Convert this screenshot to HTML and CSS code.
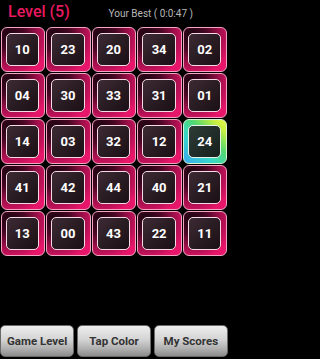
FILE: index.html
```html
<!DOCTYPE html>
<html>
<head>
<meta charset="utf-8">
<link rel="stylesheet" href="styles.css">
</head>
<body>
<div class="app">
  <header class="top">
    <span class="level">Level (5)</span>
    <span class="best">Your Best ( 0:0:47 )</span>
  </header>
  <main class="board">
    <div class="tile"><div class="face">10</div></div>
    <div class="tile"><div class="face">23</div></div>
    <div class="tile"><div class="face">20</div></div>
    <div class="tile"><div class="face">34</div></div>
    <div class="tile"><div class="face">02</div></div>
    <div class="tile"><div class="face">04</div></div>
    <div class="tile"><div class="face">30</div></div>
    <div class="tile"><div class="face">33</div></div>
    <div class="tile"><div class="face">31</div></div>
    <div class="tile"><div class="face">01</div></div>
    <div class="tile"><div class="face">14</div></div>
    <div class="tile"><div class="face">03</div></div>
    <div class="tile"><div class="face">32</div></div>
    <div class="tile"><div class="face">12</div></div>
    <div class="tile active"><div class="face">24</div></div>
    <div class="tile"><div class="face">41</div></div>
    <div class="tile"><div class="face">42</div></div>
    <div class="tile"><div class="face">44</div></div>
    <div class="tile"><div class="face">40</div></div>
    <div class="tile"><div class="face">21</div></div>
    <div class="tile"><div class="face">13</div></div>
    <div class="tile"><div class="face">00</div></div>
    <div class="tile"><div class="face">43</div></div>
    <div class="tile"><div class="face">22</div></div>
    <div class="tile"><div class="face">11</div></div>
  </main>
  <footer class="bar">
    <button class="btn">Game Level</button>
    <button class="btn">Tap Color</button>
    <button class="btn">My Scores</button>
  </footer>
</div>
</body>
</html>
```

FILE: styles.css
```css
html, body {
  margin: 0;
  padding: 0;
  background: #000;
}
.app {
  width: 228px;
  height: 359px;
  display: flex;
  flex-direction: column;
  font-family: Roboto, "Liberation Sans", sans-serif;
  overflow: hidden;
}
.top {
  height: 26.5px;
  display: flex;
  align-items: baseline;
  padding-left: 8px;
  box-sizing: border-box;
}
.level {
  color: #e8195f;
  font-size: 16px;
  font-weight: 500;
  line-height: 24px;
}
.best {
  margin-left: auto;
  margin-right: 35px;
  color: #b8b8b8;
  font-size: 10px;
}
.board {
  display: grid;
  grid-template-columns: repeat(5, 1fr);
  grid-auto-rows: 46px;
}
.tile {
  margin: 0.5px;
  border-radius: 6px;
  border: 1px solid #f2a6c4;
  background: radial-gradient(circle at 18% 16%, #1c0410 0%, #4a0724 30%, #a40f4c 58%, #e8166a 85%);
  padding: 5px 5px 5px 4px;
  box-sizing: border-box;
}
.face {
  height: 100%;
  box-sizing: border-box;
  border: 1.5px solid #f6dbe6;
  border-radius: 5px;
  background: linear-gradient(135deg, #3e2b34 0%, #2a1c23 50%, #1a1015 100%);
  display: flex;
  align-items: center;
  justify-content: center;
  color: #fff;
  font-size: 13px;
  font-weight: 700;
}
.tile.active {
  border-color: #d8f4d0;
  background: linear-gradient(45deg, #3aa8f0 0%, #38d8c8 35%, #52d870 60%, #c8f040 85%, #e8f850 100%);
}
.tile.active .face {
  background: linear-gradient(135deg, #2e3c36 0%, #1f2b27 60%, #161f1c 100%);
  border-color: #e6f2ea;
}
.bar {
  margin-top: auto;
  margin-bottom: 2px;
  display: flex;
  gap: 2.5px;
  height: 32px;
}
.btn {
  flex: 1;
  margin: 0;
  padding: 0;
  border: 1px solid #6a6a6a;
  border-radius: 5px;
  background: linear-gradient(#eeeeee 0%, #d4d4d4 45%, #b0b0b0 75%, #8c8c8c 100%);
  color: #333;
  font-family: Roboto, "Liberation Sans", sans-serif;
  font-size: 11.5px;
  font-weight: 700;
}
```
